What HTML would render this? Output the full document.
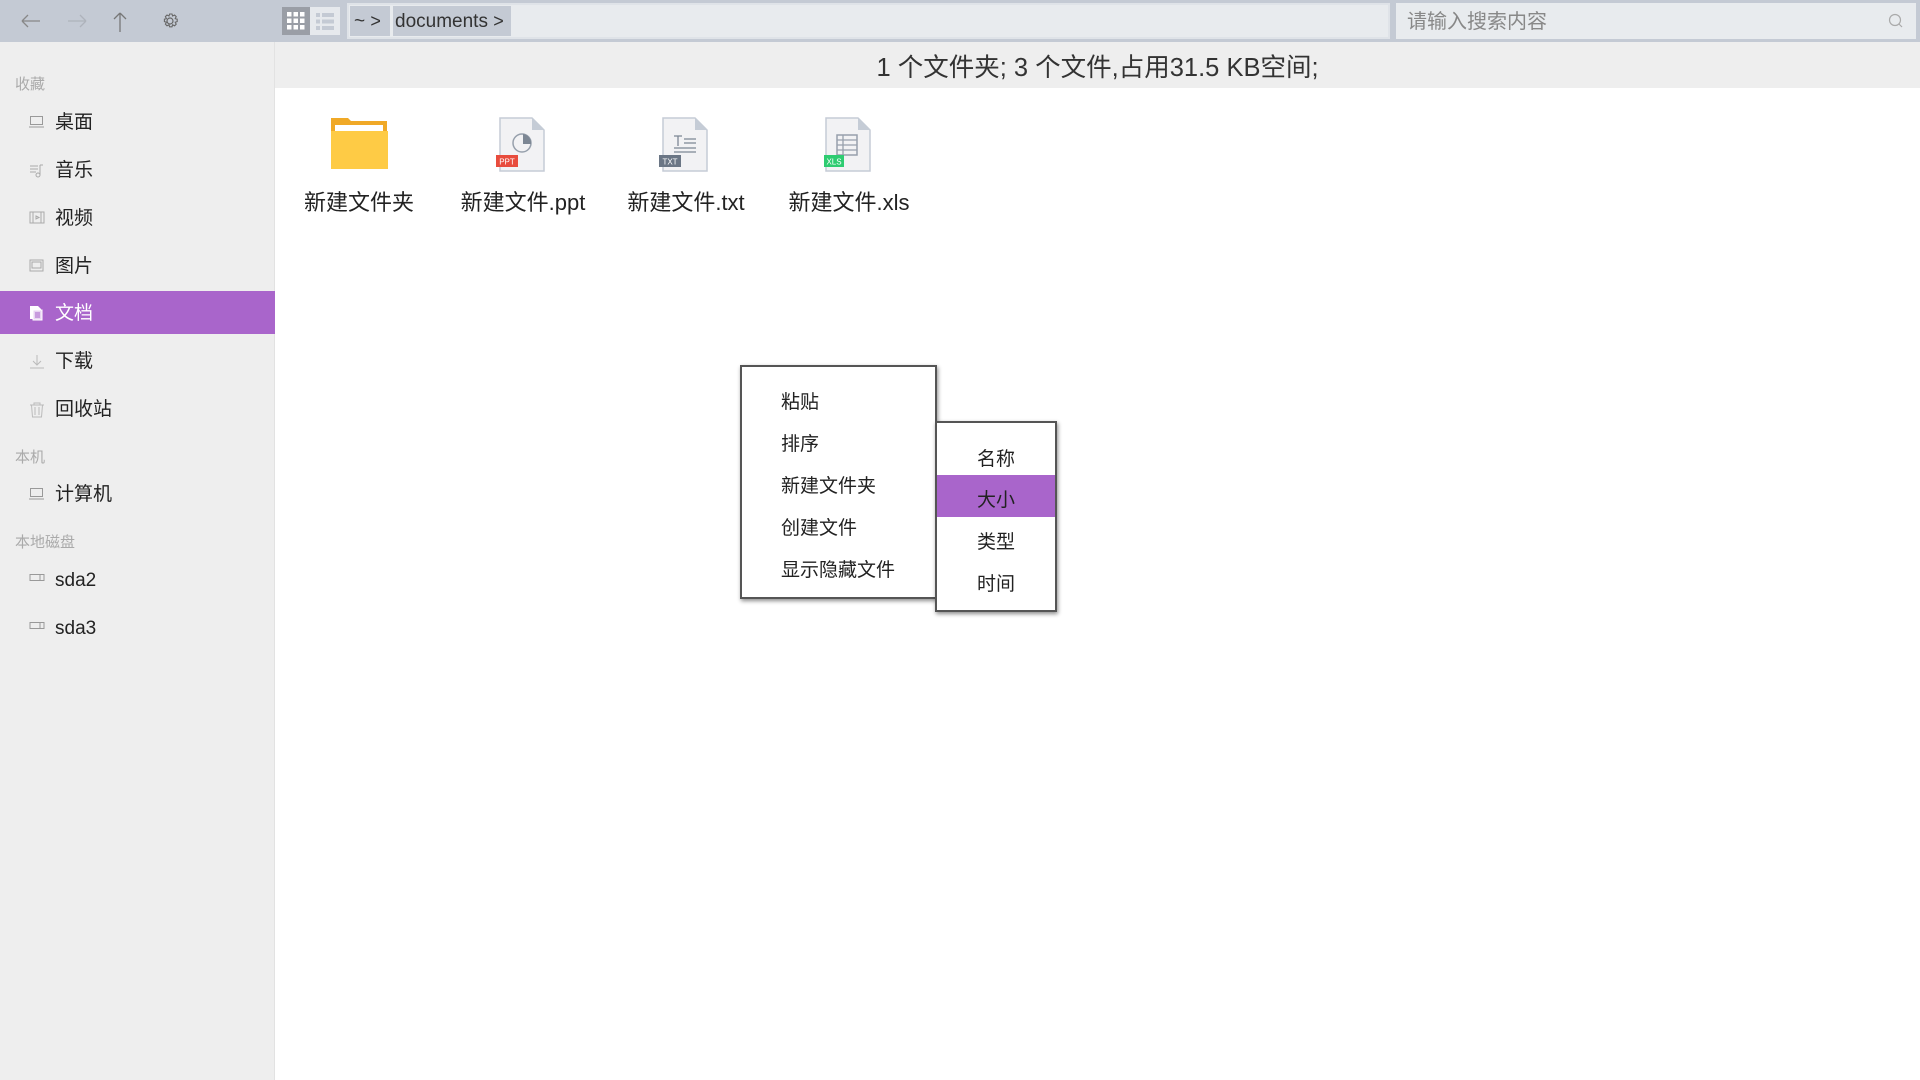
<!DOCTYPE html>
<html><head><meta charset="utf-8"><style>
*{margin:0;padding:0;box-sizing:border-box}
body{width:1920px;height:1080px;overflow:hidden;background:#fff;font-family:"Liberation Sans","Noto Sans CJK SC",sans-serif;position:relative;color:#222}
.abs{position:absolute}
#top{left:0;top:0;width:1920px;height:42px;background:#c4cad4}
#side{left:0;top:42px;width:275px;height:1038px;background:#eeeeee;border-right:1px solid #e2e2e2}
#status{left:275px;top:45px;width:1645px;height:46px;text-align:center;font-size:25.5px;line-height:46px;color:#333}
.sec{left:15px;font-size:15px;color:#aaa}
.item{left:0;width:275px;height:43px;font-size:19px;line-height:43px;padding-left:55px;color:#222}
.item svg{position:absolute;left:29px;top:14px}
.sel{background:#a965cb;color:#fff}
.lbl{font-size:22px;color:#222;text-align:center;width:160px;top:185px}
.menu{background:#fff;border:2px solid #555;box-shadow:1px 2px 4px rgba(0,0,0,.45)}
.mi{position:absolute;font-size:19px;color:#222}
</style></head><body>
<div id="top" class="abs"></div>
<div class="abs" style="left:275px;top:42px;width:1645px;height:46px;background:#eeeeee"></div>
<svg class="abs" style="left:18px;top:10px" width="180" height="24" viewBox="0 0 180 24">
<path d="M4 11H22M4 11L10 5M4 11L10 17" stroke="#888" stroke-width="1.3" fill="none"/>
<path d="M50 11H68M68 11L62 5M68 11L62 17" stroke="#aeb3bb" stroke-width="1.3" fill="none"/>
<path d="M102 3V22M102 3L96 9M102 3L108 9" stroke="#777" stroke-width="1.3" fill="none"/>
<circle cx="152" cy="11" r="3" stroke="#666" stroke-width="1.2" fill="none"/>
<path d="M152 4l2 0 .6 2 2-1 1.6 1.6-1 2 2 .6v2.4l-2 .6 1 2-1.6 1.6-2-1-.6 2h-2.4l-.6-2-2 1-1.6-1.6 1-2-2-.6v-2.4l2-.6-1-2 1.6-1.6 2 1 .6-2z" stroke="#666" stroke-width="1.1" fill="none"/>
</svg>
<div class="abs" style="left:282px;top:7px;width:28px;height:28px;background:#9a9ea6"></div>
<svg class="abs" style="left:287px;top:12px" width="18" height="18"><g fill="#fff"><rect x="0" y="0" width="4.5" height="4.5"/><rect x="6.5" y="0" width="4.5" height="4.5"/><rect x="13" y="0" width="4.5" height="4.5"/><rect x="0" y="6.5" width="4.5" height="4.5"/><rect x="6.5" y="6.5" width="4.5" height="4.5"/><rect x="13" y="6.5" width="4.5" height="4.5"/><rect x="0" y="13" width="4.5" height="4.5"/><rect x="6.5" y="13" width="4.5" height="4.5"/><rect x="13" y="13" width="4.5" height="4.5"/></g></svg>
<div class="abs" style="left:310px;top:7px;width:30px;height:28px;background:#e6e9ed"></div>
<svg class="abs" style="left:316px;top:13px" width="20" height="18"><g fill="#c4cad4"><rect x="0" y="0" width="4" height="4"/><rect x="6" y="0" width="12" height="4"/><rect x="0" y="6.5" width="4" height="4"/><rect x="6" y="6.5" width="12" height="4"/><rect x="0" y="13" width="4" height="4"/><rect x="6" y="13" width="12" height="4"/></g></svg>
<div class="abs" style="left:347px;top:3px;width:1043px;height:36px;background:#e8ebee;border:2px solid #dfe3e8"></div>
<div class="abs" style="left:350px;top:6px;width:40px;height:30px;background:#c4cad4;font-size:19px;line-height:30px;padding-left:4px;color:#333">~ <span style="font-size:18px">&gt;</span></div>
<div class="abs" style="left:393px;top:6px;width:118px;height:30px;background:#c4cad4;font-size:19px;line-height:30px;padding-left:2px;color:#333">documents <span style="font-size:18px">&gt;</span></div>
<div class="abs" style="left:1396px;top:3px;width:520px;height:36px;background:#e8ebee;font-size:20px;line-height:38px;padding-left:11px;color:#888">请输入搜索内容</div>
<svg class="abs" style="left:1888px;top:13px" width="16" height="16"><circle cx="7" cy="7" r="5.5" stroke="#aaa" stroke-width="1.2" fill="none"/><path d="M11 11l3 3" stroke="#aaa" stroke-width="1.2"/></svg>

<div id="side" class="abs"></div>
<div class="abs sec" style="top:73px">收藏</div>
<div class="abs item" style="top:101px"><svg width="16" height="14"><rect x="1.5" y="1.5" width="12" height="8" stroke="#999" fill="none"/><path d="M0 12H15" stroke="#999"/></svg>桌面</div>
<div class="abs item" style="top:149px"><svg width="16" height="16"><path d="M1 3h8M1 6h8M1 9h6M11 2v10M11 2h3" stroke="#aaa" fill="none"/><circle cx="9" cy="12" r="2" stroke="#aaa" fill="none"/></svg>音乐</div>
<div class="abs item" style="top:197px"><svg width="16" height="14"><rect x="1" y="1" width="14" height="11" stroke="#aaa" fill="none"/><path d="M4 1v11M12 1v11M7 5l3 1.5L7 8z" stroke="#aaa" fill="none"/></svg>视频</div>
<div class="abs item" style="top:245px"><svg width="16" height="14"><rect x="1" y="1" width="13" height="11" stroke="#aaa" fill="none"/><rect x="3" y="3" width="9" height="6" stroke="#aaa" fill="none"/></svg>图片</div>
<div class="abs item sel" style="top:291px;line-height:45px"><svg width="16" height="16"><path d="M1 1h8l3 3v10H1z" fill="#fff"/><path d="M4 5h9v10H4z" fill="#e8d4f2" stroke="#fff"/><path d="M6 8h5M6 10h5M6 12h5" stroke="#a965cb"/></svg>文档</div>
<div class="abs item" style="top:340px"><svg width="16" height="16"><path d="M8 1v10M4 7l4 4 4-4M1 14h14" stroke="#bbb" fill="none"/></svg>下载</div>
<div class="abs item" style="top:388px"><svg width="16" height="16"><path d="M1 3h14M5 3V1h6v2M2.5 3l1 12h9l1-12M6 5v8M10 5v8" stroke="#bbb" fill="none"/></svg>回收站</div>
<div class="abs sec" style="top:446px">本机</div>
<div class="abs item" style="top:473px"><svg width="16" height="14"><rect x="1.5" y="1.5" width="12" height="8" stroke="#999" fill="none"/><path d="M0 12H15" stroke="#999"/></svg>计算机</div>
<div class="abs sec" style="top:531px">本地磁盘</div>
<div class="abs item" style="top:559px"><svg width="16" height="10"><rect x="1" y="1.5" width="14" height="6" stroke="#999" fill="none"/><path d="M11 1.5v6" stroke="#999"/></svg>sda2</div>
<div class="abs item" style="top:607px"><svg width="16" height="10"><rect x="1" y="1.5" width="14" height="6" stroke="#999" fill="none"/><path d="M11 1.5v6" stroke="#999"/></svg>sda3</div>

<div id="status" class="abs">1 个文件夹; 3 个文件,占用31.5 KB空间;</div>

<svg class="abs" style="left:330px;top:117px" width="60" height="54"><path d="M1 1h17l3 3h36v47H1z" fill="#f0a927"/><rect x="5" y="8" width="48" height="6" fill="#fff"/><rect x="1" y="14" width="57" height="38" fill="#fecb45"/></svg>
<svg class="abs" style="left:494px;top:117px" width="60" height="56"><path d="M6 1h32l12 12v41H6z" fill="#f2f2f4" stroke="#c5ccd6" stroke-width="1.5"/><path d="M38 1v12h12" fill="#c5ccd6"/><circle cx="28" cy="26" r="9" fill="none" stroke="#97a0ac" stroke-width="1.5"/><path d="M29 17a9 9 0 0 1 8 10h-8z" fill="#7d8794"/><rect x="2" y="38" width="22" height="12" fill="#e84c3d"/><text x="13" y="47.5" font-size="8" fill="#fff" text-anchor="middle" font-family="Liberation Sans">PPT</text></svg>
<svg class="abs" style="left:657px;top:117px" width="60" height="56"><path d="M6 1h32l12 12v41H6z" fill="#f2f2f4" stroke="#c5ccd6" stroke-width="1.5"/><path d="M38 1v12h12" fill="#c5ccd6"/><path d="M17 19h8M21 19v10M27 22h12M27 26h12M17 31h22M17 35h22" stroke="#7d8794" stroke-width="1.3"/><rect x="2" y="38" width="22" height="12" fill="#6b7685"/><text x="13" y="47.5" font-size="8" fill="#fff" text-anchor="middle" font-family="Liberation Sans">TXT</text></svg>
<svg class="abs" style="left:820px;top:117px" width="60" height="56"><path d="M6 1h32l12 12v41H6z" fill="#f2f2f4" stroke="#c5ccd6" stroke-width="1.5"/><path d="M38 1v12h12" fill="#c5ccd6"/><rect x="17" y="18" width="20" height="20" fill="none" stroke="#97a0ac" stroke-width="1.5"/><path d="M17 23h20M17 28h20M17 33h20M23 18v20" stroke="#97a0ac" stroke-width="1.3"/><rect x="4" y="38" width="20" height="12" fill="#2ecc71"/><text x="14" y="47.5" font-size="8" fill="#fff" text-anchor="middle" font-family="Liberation Sans">XLS</text></svg>
<div class="abs lbl" style="left:279px">新建文件夹</div>
<div class="abs lbl" style="left:443px">新建文件.ppt</div>
<div class="abs lbl" style="left:606px">新建文件.txt</div>
<div class="abs lbl" style="left:769px">新建文件.xls</div>

<div class="abs menu" style="left:740px;top:365px;width:197px;height:234px">
<div class="mi" style="left:39px;top:20px">粘贴</div>
<div class="mi" style="left:39px;top:62px">排序</div>
<div class="mi" style="left:39px;top:104px">新建文件夹</div>
<div class="mi" style="left:39px;top:146px">创建文件</div>
<div class="mi" style="left:39px;top:188px">显示隐藏文件</div>
</div>
<div class="abs menu" style="left:935px;top:421px;width:122px;height:191px">
<div class="abs" style="left:0;top:52px;width:118px;height:42px;background:#a965cb"></div>
<div class="mi" style="left:0;width:118px;text-align:center;top:21px">名称</div>
<div class="mi" style="left:0;width:118px;text-align:center;top:62px">大小</div>
<div class="mi" style="left:0;width:118px;text-align:center;top:104px">类型</div>
<div class="mi" style="left:0;width:118px;text-align:center;top:146px">时间</div>
</div>
</body></html>
